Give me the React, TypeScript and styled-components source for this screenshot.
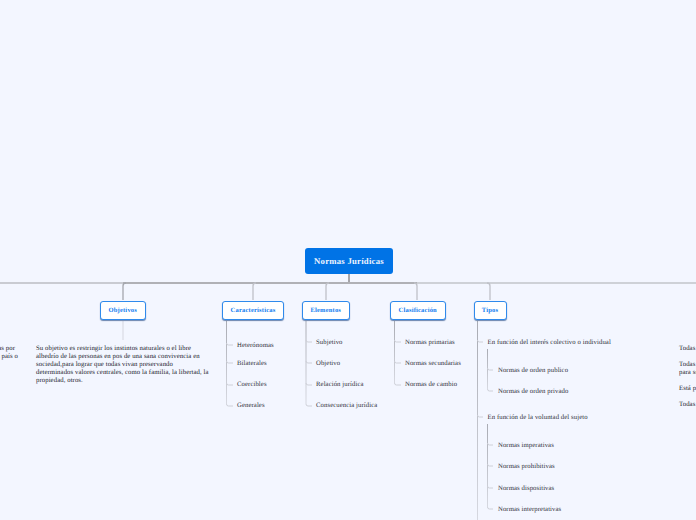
import React from "react";
import styled, { createGlobalStyle } from "styled-components";

const GlobalStyle = createGlobalStyle`
  html, body {
    margin: 0;
    padding: 0;
    background: #f3f6ff;
    overflow: hidden;
  }
`;

const Canvas = styled.div`
  position: relative;
  width: 696px;
  height: 520px;
  overflow: hidden;
  background: #f3f6ff;
  font-family: "Liberation Serif", "DejaVu Serif", serif;
  text-rendering: geometricPrecision;
`;

const Lines = styled.svg`
  position: absolute;
  left: 0;
  top: 0;
`;

const RootNode = styled.div`
  position: absolute;
  left: 305px;
  top: 248px;
  width: 88px;
  height: 26px;
  border-radius: 3px;
  background: #0073e6;
  color: #eef5ff;
  font-size: 8.7px;
  font-weight: 700;
  letter-spacing: 0.25px;
  display: flex;
  align-items: center;
  justify-content: center;
`;

const MainNode = styled.div<{ $x: number; $w: number }>`
  position: absolute;
  left: ${(p) => p.$x}px;
  top: 300.5px;
  width: ${(p) => p.$w}px;
  height: 19.5px;
  box-sizing: border-box;
  border: 1.3px solid #2f8aec;
  border-radius: 3px;
  background: #ffffff;
  box-shadow: 0 1px 1px rgba(30, 70, 130, 0.65);
  color: #0f7bf0;
  font-size: 6.5px;
  font-weight: 700;
  letter-spacing: 0.2px;
  display: flex;
  align-items: center;
  justify-content: center;
`;

/* a block of child topics hanging under a node */
const Branch = styled.div<{ $x: number; $y: number }>`
  position: absolute;
  left: ${(p) => p.$x}px;
  top: ${(p) => p.$y - 3.5}px;
  display: flex;
  flex-direction: column;
  gap: 13.33px;
`;

const SubBranch = styled.div`
  display: flex;
  flex-direction: column;
  gap: 13.33px;
  padding-left: 10.5px;
  margin-top: 6.7px;
  margin-bottom: 4.7px;
`;

const Label = styled.div<{ $low?: boolean }>`
  height: 8px;
  line-height: 8px;
  font-size: 6.7px;
  letter-spacing: 0.1px;
  color: #30303a;
  white-space: nowrap;
  ${(p) => p.$low && "margin: 3px 0 -3px;"}
`;

const Paragraph = styled.div<{ $right?: boolean; $x: number; $y: number }>`
  position: absolute;
  ${(p) => (p.$right ? `right: ${696 - p.$x}px;` : `left: ${p.$x}px;`)}
  top: ${(p) => p.$y - 3.5}px;
  line-height: 8px;
  font-size: 6.7px;
  letter-spacing: 0.1px;
  color: #22222c;
  white-space: nowrap;
  text-align: ${(p) => (p.$right ? "right" : "left")};
`;

const nodes = [
  { text: "Objetivos", x: 100, w: 45.5 },
  { text: "Características", x: 222, w: 62 },
  { text: "Elementos", x: 302, w: 47.5 },
  { text: "Clasificación", x: 390, w: 55.5 },
  { text: "Tipos", x: 473.5, w: 33 },
];

const Connector = ({ x, top, ys, end, tick, id }: { x: number; top: number; ys: number[]; end: number; tick: number; id: string }) => (
  <g fill="none" strokeWidth="1">
    <linearGradient id={id} gradientUnits="userSpaceOnUse" x1="0" y1={top} x2="0" y2={end}>
      <stop offset="0" stopColor="#a9abb3" />
      <stop offset="1" stopColor="#d6d8e0" />
    </linearGradient>
    <path d={`M${x} ${top}V${end}`} stroke={`url(#${id})`} />
    {ys.map((y) => (
      <path key={y} d={`M${x} ${y - 2}q0 2 2 2H${tick}`} stroke="#ced0d8" />
    ))}
  </g>
);

const App: React.FC = () => {
  return (
    <Canvas>
      <GlobalStyle />
      <Lines width="696" height="520" viewBox="0 0 696 520">
        <path d="M349 274V283" stroke="#a5a5aa" strokeWidth="2" fill="none" />
        <path d="M0 283H123" stroke="#c9cbd2" strokeWidth="1.8" fill="none" />
        <path d="M123 283H417" stroke="#b0b1b6" strokeWidth="1.8" fill="none" />
        <path d="M417 283H696" stroke="#c2c4ca" strokeWidth="1.3" fill="none" />
        <g fill="none" strokeWidth="1.3">
          <path d="M123 300V286q0-3 3-3" stroke="#a5a7ae" />
          <path d="M253 300V286q0-3 3-3" stroke="#bfc1c8" />
          <path d="M326 300V286q0-3 3-3" stroke="#bfc1c8" />
          <path d="M417 300V286q0-3-3-3" stroke="#bfc1c8" />
          <path d="M490 300V286q0-3-3-3" stroke="#bfc1c8" />
        </g>
        <path d="M123 321V340" stroke="#dcdee6" strokeWidth="1.3" fill="none" />
        <Connector id="c1" x={226.5} top={321} end={404} ys={[345, 363, 385, 406]} tick={233} />
        <Connector id="c2" x={306} top={321} end={404} ys={[342, 363, 385, 406]} tick={312} />
        <Connector id="c3" x={394.5} top={321} end={383} ys={[342, 363, 385]} tick={401} />
        <Connector id="c4" x={477.5} top={321} end={520} ys={[342, 417]} tick={483} />
        <Connector id="c5" x={487.5} top={349} end={389} ys={[370, 391]} tick={493} />
        <Connector id="c6" x={487.5} top={424} end={507} ys={[445, 466, 488, 509]} tick={493} />
      </Lines>
      <RootNode>Normas Jurídicas</RootNode>
      {nodes.map((n) => (
        <MainNode key={n.text} $x={n.x} $w={n.w}>
          {n.text}
        </MainNode>
      ))}
      <Branch $x={237} $y={342}>
        <Label $low>Heterónomas</Label>
        <Label>Bilaterales</Label>
        <Label>Coercibles</Label>
        <Label>Generales</Label>
      </Branch>
      <Branch $x={316} $y={342}>
        <Label>Subjetivo</Label>
        <Label>Objetivo</Label>
        <Label>Relación jurídica</Label>
        <Label>Consecuencia jurídica</Label>
      </Branch>
      <Branch $x={405} $y={342}>
        <Label>Normas primarias</Label>
        <Label>Normas secundarias</Label>
        <Label>Normas de cambio</Label>
      </Branch>
      <Branch $x={487.5} $y={342}>
        <Label>En función del interés colectivo o individual</Label>
        <SubBranch>
          <Label>Normas de orden publico</Label>
          <Label>Normas de orden privado</Label>
        </SubBranch>
        <Label>En función de la voluntad del sujeto</Label>
        <SubBranch>
          <Label>Normas imperativas</Label>
          <Label>Normas prohibitivas</Label>
          <Label>Normas dispositivas</Label>
          <Label>Normas interpretativas</Label>
        </SubBranch>
      </Branch>
      <Paragraph $x={36} $y={348}>
        Su objetivo es restringir los instintos naturales o el libre
        <br />
        albedrío de las personas en pos de una sana convivencia en
        <br />
        sociedad,para lograr que todas vivan preservando
        <br />
        determinados valores centrales, como la familia, la libertad, la
        <br />
        propiedad, otros.
      </Paragraph>
      <Paragraph $right $x={15} $y={348}>
        establecidas por
      </Paragraph>
      <Paragraph $right $x={18} $y={356}>
        cada país o
      </Paragraph>
      <Paragraph $x={679} $y={348}>Todas las normas</Paragraph>
      <Paragraph $x={679} $y={364}>
        Todas las normas
        <br />
        para su
      </Paragraph>
      <Paragraph $x={679} $y={388}>Está presente</Paragraph>
      <Paragraph $x={679} $y={404}>Todas las normas</Paragraph>
    </Canvas>
  );
};

export default App;
